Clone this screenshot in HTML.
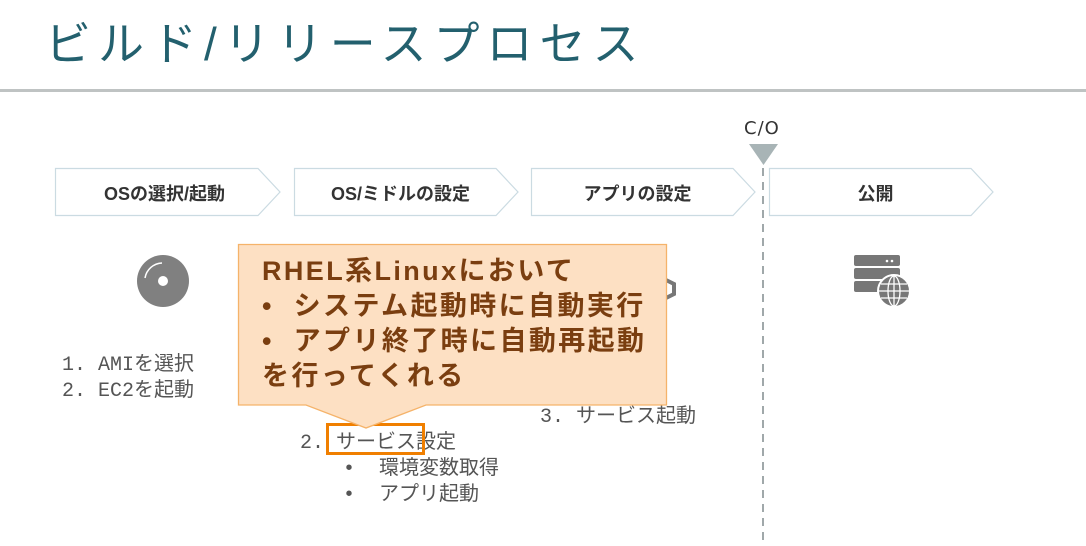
<!DOCTYPE html>
<html><head><meta charset="utf-8"><style>
body{margin:0;width:1086px;height:546px;background:#fff;position:relative;overflow:hidden;font-family:"Liberation Sans","Noto Sans CJK JP",sans-serif}
.a{position:absolute;white-space:nowrap}
.title{left:45px;top:8px;font-size:46px;color:#23606e;letter-spacing:7px}
.hr{left:0;top:89px;width:1086px;height:3px;background:#bfc3c3}
.lbl{font-size:18px;font-weight:bold;color:#333;text-align:center;width:205px;top:180px}
.li{font-family:"Liberation Mono","Noto Sans CJK JP",monospace;font-size:20px;color:#555}
.co{font-size:27px;font-weight:bold;color:#7a3e10;line-height:35px;letter-spacing:2.4px}
</style></head><body>
<div class="a title">ビルド/リリースプロセス</div>
<div class="a hr"></div>
<svg class="a" style="left:0;top:0" width="1086" height="546">
<g fill="#fff" stroke="#cbdbe2" stroke-width="1.2">
<path d="M55.5 168.5H258L280 192L258 215.5H55.5Z"/>
<path d="M294.5 168.5H496L518 192L496 215.5H294.5Z"/>
<path d="M531.5 168.5H733L755 192L733 215.5H531.5Z"/>
<path d="M769.5 168.5H971L993 192L971 215.5H769.5Z"/>
</g>
<path d="M749 144H778L763.5 165Z" fill="#a8b4b6"/>
<line x1="763" y1="168" x2="763" y2="540" stroke="#a0a8aa" stroke-width="2" stroke-dasharray="8,6"/>
<circle cx="163" cy="281" r="26" fill="#808080"/>
<circle cx="163" cy="281" r="5" fill="#fff"/>
<path d="M145 278A18 18 0 0 1 162 263" stroke="#fff" stroke-width="1.5" fill="none"/>
<g fill="#777">
<rect x="854" y="255" width="46" height="11" rx="2"/>
<rect x="854" y="268" width="46" height="11" rx="2"/>
<rect x="854" y="281" width="30" height="11" rx="2"/>
<circle cx="894" cy="291" r="16" stroke="#fff" stroke-width="2"/>
</g>
<circle cx="887" cy="261" r="1.3" fill="#fff"/><circle cx="892" cy="261" r="1.3" fill="#fff"/>
<g stroke="#fff" stroke-width="1.3" fill="none"><ellipse cx="894" cy="291" rx="6" ry="15"/><line x1="879" y1="291" x2="909" y2="291"/><line x1="894" y1="276" x2="894" y2="306"/><line x1="881" y1="284" x2="907" y2="284"/><line x1="881" y1="298" x2="907" y2="298"/></g>
<path d="M666 280l8 4v10l-8 4" stroke="#777" stroke-width="4" fill="none"/>
</svg>
<div class="a lbl" style="left:62px">OSの選択/起動</div>
<div class="a lbl" style="left:298px">OS/ミドルの設定</div>
<div class="a lbl" style="left:535px">アプリの設定</div>
<div class="a lbl" style="left:773px">公開</div>
<div class="a" style="left:744px;top:118px;font-size:18px;color:#333;letter-spacing:1px;font-family:'DejaVu Sans',sans-serif">C/O</div>
<div class="a li" style="left:62px;top:347px">1. AMIを選択</div>
<div class="a li" style="left:62px;top:373px">2. EC2を起動</div>
<div class="a li" style="left:540px;top:399px">3. サービス起動</div>
<div class="a li" style="left:383px;top:399px">g</div>
<div class="a li" style="left:300px;top:425px">2. サービス設定</div>
<div class="a li" style="left:343px;top:451px">•&nbsp;&nbsp;環境変数取得</div>
<div class="a li" style="left:343px;top:477px">•&nbsp;&nbsp;アプリ起動</div>
<div class="a" style="left:326px;top:423px;width:93px;height:26px;border:3px solid #f07f00"></div>
<svg class="a" style="left:236px;top:243px" width="434" height="190">
<path d="M2.5 1.5H430.5V162H190L130 185L70 162H2.5Z" fill="#fde0c3" stroke="#f5b36a" stroke-width="1.3"/>
</svg>
<div class="a co" style="left:262px;top:254px">RHEL系Linuxにおいて<br>•&nbsp;&nbsp;システム起動時に自動実行<br>•&nbsp;&nbsp;アプリ終了時に自動再起動<br>を行ってくれる</div>
</body></html>
